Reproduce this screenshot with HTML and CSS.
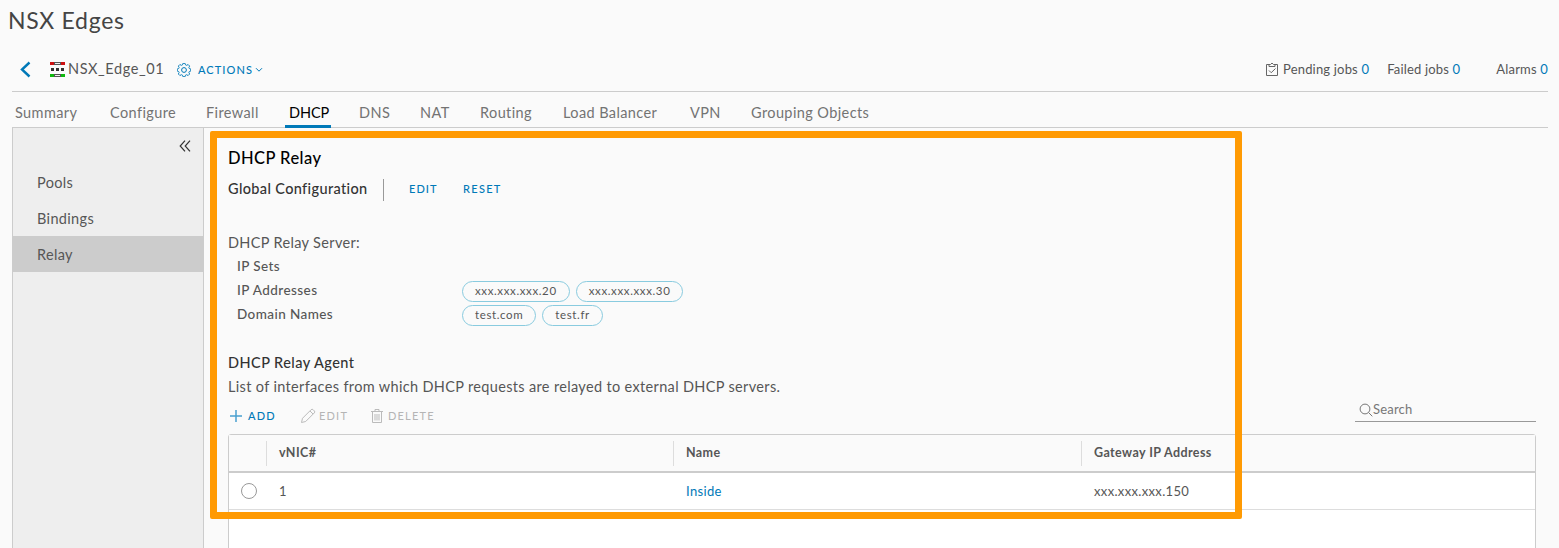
FILE: index.html
```html
<!DOCTYPE html>
<html lang="en">
<head>
<meta charset="utf-8">
<title>NSX Edges</title>
<link rel="stylesheet" href="styles.css">
</head>
<body>
<h1 class="page-title">NSX Edges</h1>
<div class="edge">
  <header class="edge-bar">
    <svg class="back" width="12" height="18" viewBox="0 0 12 18"><path d="M9.500 1.500L2 8.500l7.500 7" fill="none" stroke="#0079b8" stroke-width="2.400"/></svg>
    <svg class="edge-icon" width="16" height="16" viewBox="0 0 16 16" shape-rendering="crispEdges">
      <path d="M0 0h15v3H0z" fill="#555"/><path d="M0 0h4v3H0zM11 0h4v3h-4z" fill="#c11"/><path d="M5 1h5v1H5z" fill="#eee"/>
      <path d="M1 6h3v3H1zM6 6h3v3H6zM11 6h3v3h-3z" fill="#333"/>
      <path d="M0 12h15v3H0z" fill="#555"/><path d="M0 12h4v3H0zM11 12h4v3h-4z" fill="#0fb80f"/><path d="M5 13h5v1H5z" fill="#eee"/>
    </svg>
    <span class="edge-name">NSX_Edge_01</span>
    <button class="actions">
      <svg width="14" height="14" viewBox="-7 -7 14 14" fill="none" stroke="#0079b8" stroke-width="1"><circle r="2.400"/><path d="M-1.200-6.700h2.400l.5 1.700 1.200.5 1.700-.9 1.700 1.700-.9 1.600.5 1.100 1.600.5v2.400l-1.600.5-.5 1.100.9 1.600-1.700 1.700-1.700-.9-1.200.5-.5 1.700h-2.400l-.5-1.700-1.200-.5-1.700.9-1.700-1.700.9-1.600-.5-1.100-1.600-.5V-.5l1.600-.5.5-1.100-.9-1.600 1.700-1.700 1.700.9 1.200-.5z" transform="translate(0 -.6) scale(.9)"/></svg>
      <span>ACTIONS</span>
      <svg width="8" height="6" viewBox="0 0 8 6"><path d="M1 1.200l3 3 3-3" fill="none" stroke="#0079b8"/></svg>
    </button>
    <div class="status">
      <svg width="14" height="15" viewBox="0 0 14 15" fill="none" stroke="#666"><path d="M4 2.500H1.500v11h11v-11H10M4 4.500V2.500h1.500Q7-.5 8.500 2.500H10v2zM4 8.500l2.200 2.200L10.500 6.500"/></svg>
      <span class="pending">Pending jobs <b>0</b></span>
      <span class="failed">Failed jobs <b>0</b></span>
      <span>Alarms <b>0</b></span>
    </div>
  </header>
  <nav class="tabs">
    <a>Summary</a><a>Configure</a><a>Firewall</a><a class="active">DHCP</a><a>DNS</a><a>NAT</a><a>Routing</a><a>Load Balancer</a><a>VPN</a><a>Grouping Objects</a>
  </nav>
  <div class="body">
    <aside class="side">
      <svg class="collapse" width="12" height="12" viewBox="0 0 12 12"><path d="M6 .7L1.200 6 6 11.300M11 .7L6.200 6l4.800 5.300" fill="none" stroke="#333" stroke-width="1.200"/></svg>
      <a>Pools</a><a>Bindings</a><a class="selected">Relay</a>
    </aside>
    <main class="content">
      <h2>DHCP Relay</h2>
      <div class="config"><h3>Global Configuration</h3><a class="edit">EDIT</a><a>RESET</a></div>
      <p class="server">DHCP Relay Server:</p>
      <dl class="server-list">
        <dt>IP Sets</dt><dd></dd>
        <dt>IP Addresses</dt><dd><span class="chip">xxx.xxx.xxx.20</span><span class="chip">xxx.xxx.xxx.30</span></dd>
        <dt>Domain Names</dt><dd><span class="chip">test.com</span><span class="chip">test.fr</span></dd>
      </dl>
      <h3 class="agent">DHCP Relay Agent</h3>
      <p class="hint">List of interfaces from which DHCP requests are relayed to external DHCP servers.</p>
      <div class="tools">
        <a class="add"><svg width="12" height="12" viewBox="0 0 12 12"><path d="M6 0v12M0 6h12" stroke="#4aa0cf" stroke-width="1.500"/></svg>ADD</a>
        <a class="off modify"><svg width="16" height="16" viewBox="0 0 16 16" fill="none" stroke="#bbb"><path d="M1.500 14.500l1-4.200 8.600-8.600q1-1 2 0l1.200 1.200q1 1 0 2l-8.600 8.600zM10 3l3 3"/></svg>EDIT</a>
        <a class="off"><svg width="14" height="16" viewBox="0 0 14 16" fill="none" stroke="#bbb"><path d="M1 3.500h12M2.500 3.500v11h9v-11M5 3V1.500h4V3M5 6v6.500M7 6v6.500M9 6v6.500"/></svg>DELETE</a>
        <div class="search"><svg width="14" height="14" viewBox="0 0 14 14" fill="none" stroke="#777"><circle cx="6" cy="6" r="4.900"/><path d="M9.500 9.500l3.800 3.800"/></svg><span>Search</span></div>
      </div>
      <div class="grid">
        <div class="row head"><span></span><span>vNIC#</span><span>Name</span><span>Gateway IP Address</span></div>
        <div class="row"><span><i class="radio"></i></span><span>1</span><span class="link">Inside</span><span>xxx.xxx.xxx.150</span></div>
      </div>
    </main>
  </div>
</div>
<div class="highlight"></div>
</body>
</html>
```
FILE: styles.css
```css
* { box-sizing: border-box; margin: 0; padding: 0; }
body {
  height: 548px;
  overflow: hidden;
  background: #fafafa;
  color: #565656;
  font-family: Lato, "Open Sans", sans-serif;
  font-size: 14.5px;
  letter-spacing: .34px;
  white-space: nowrap;
}
a, button { color: #0079b8; text-decoration: none; }
.page-title { height: 48px; padding-left: 8px; font-size: 23px; line-height: 41px; font-weight: 400; color: #444; letter-spacing: .7px; }
.edge { width: 1536px; margin-left: 12px; }
.edge-bar { display: flex; align-items: center; height: 44px; border-bottom: 1px solid #ccc; }
.back { margin-left: 8px; }
.edge-icon { margin-left: 18px; }
.edge-name { margin-left: 2px; width: 109px; padding-bottom: 2px; letter-spacing: .6px; }
.actions { display: flex; align-items: center; border: 0; background: none; font: 500 11px Lato, sans-serif; letter-spacing: 1.1px; }
.actions span { width: 59px; margin-left: 5px; }
.status { display: flex; align-items: center; margin-left: auto; font-size: 13px; letter-spacing: .18px; }
.status svg { margin-right: 4px; }
.status span { padding-bottom: 2px; }
.status b { font-weight: 400; color: #0079b8; }
.pending { margin-right: 18px; }
.failed { margin-right: 36px; }
.tabs { display: grid; grid-template-columns: 95px 96px 83px 70px 61px 60px 83px 127px 61px auto; height: 36px; padding-left: 3px; border-bottom: 1px solid #ccc; line-height: 41px; }
.tabs a { color: #737373; letter-spacing: .4px; }
.tabs .active { justify-self: start; width: 46px; height: 36px; margin-left: -4px; padding-left: 4px; color: #000; border-bottom: 3px solid #0079b8; letter-spacing: -.1px; }
.body { display: flex; height: 420px; }
.side { width: 192px; padding-top: 12px; background: #eee; border: solid #ccc; border-width: 0 1px; }
.collapse { display: block; margin: 0 0 12px 166px; }
.side a { display: block; height: 36px; padding-left: 24px; line-height: 37px; color: #565656; }
.side .selected { background: #ccc; }
.content { width: 1332px; padding: 18px 0 0 24px; }
h2 { height: 24px; font-size: 16.5px; line-height: 25px; font-weight: 500; letter-spacing: .45px; color: #000; }
h3 { font-size: 14.5px; line-height: 24px; font-weight: 500; color: #333; }
.config { display: flex; align-items: center; height: 60px; padding-bottom: 20px; font-size: 11px; font-weight: 500; letter-spacing: 1.3px; }
.config h3 { width: 156px; height: 22px; margin-right: 25px; line-height: 19px; letter-spacing: .36px; border-right: 1px solid #999; }
.config a { padding-bottom: 3px; }
.config .edit { width: 54px; letter-spacing: 1.05px; }
.server { line-height: 25px; height: 24px; }
.server-list { display: grid; grid-template-columns: 225px 1fr; grid-auto-rows: 24px; padding-left: 9px; font-size: 13.5px; letter-spacing: .5px; line-height: 24px; }
.server-list dt { font-weight: 500; letter-spacing: .42px; }
.server-list dd { display: flex; gap: 6px; padding-top: 3px; }
.chip { height: 21px; padding: 0 12px; border: 1px solid #89cbdf; border-radius: 11px; font-size: 11.5px; line-height: 18px; letter-spacing: .62px; }
.agent { height: 24px; margin-top: 24px; line-height: 25px; letter-spacing: .45px; }
.hint { height: 24px; line-height: 25px; }
.tools { display: flex; height: 36px; font-size: 11px; line-height: 36px; letter-spacing: 1.2px; }
.tools a { display: flex; align-items: center; }
.tools .add { width: 72px; padding-left: 2px; font-weight: 500; }
.add svg { margin-right: 6px; }
.tools .modify { width: 70px; }
.tools .off { color: #b5b5b5; }
.off svg { margin-right: 4px; }
.modify svg { margin-right: 3px; }
.search { display: flex; align-items: center; width: 181px; height: 24px; margin-left: auto; padding-left: 4px; border-bottom: 1px solid #999; font-size: 13px; letter-spacing: .2px; color: #777; }
.search span { padding-bottom: 2px; }
.grid { width: 1308px; height: 116px; background: #fff; border: 1px solid #ccc; border-radius: 3px 3px 0 0; }
.row { display: grid; grid-template-columns: 37px 407px 408px 1fr; height: 38px; border-bottom: 1px solid #ddd; font-size: 13px; line-height: 37px; }
.row + .row { height: 37px; }
.row span + span { padding-left: 13px; }
.head { font-size: 12.5px; letter-spacing: .4px; font-weight: 700; border-bottom: 2px solid #ccc; background: #fafafa; align-items: center; }
.head span { height: 25px; line-height: 24px; }
.head span + span { border-left: 1px solid #ddd; padding-left: 12px; }
.radio { display: block; width: 16px; height: 16px; margin: 10px 12px; border: 1px solid #999; border-radius: 50%; background: #fff; }
.link { color: #0079b8; }
.highlight { position: absolute; left: 210px; top: 131px; width: 1032px; height: 388px; border: 7px solid #ff9a03; border-radius: 2px; }
```
